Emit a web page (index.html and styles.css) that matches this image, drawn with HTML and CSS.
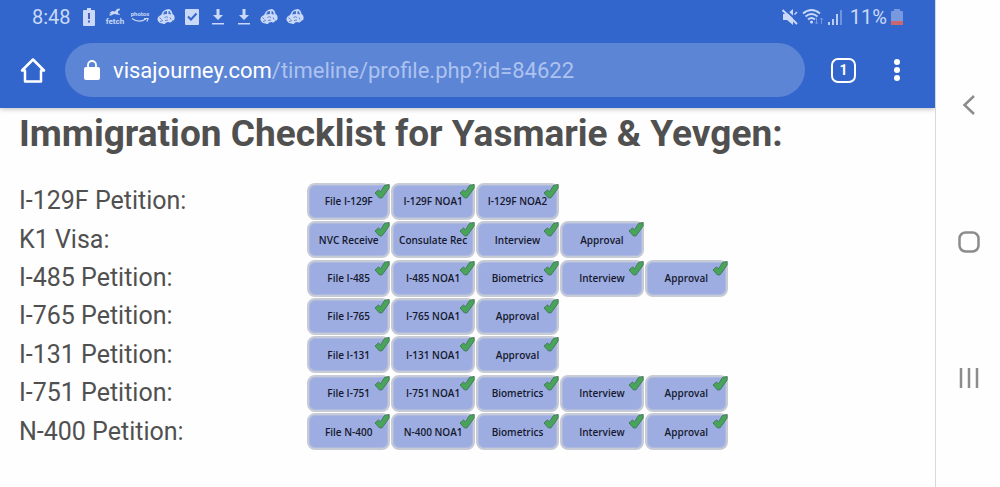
FILE: index.html
```html
<!DOCTYPE html>
<html lang="en">
<head>
<meta charset="utf-8">
<title>Immigration Checklist</title>
<link rel="stylesheet" href="styles.css">
</head>
<body>
<svg class="defs" aria-hidden="true">
  <symbol id="tick" viewBox="0 0 16 16">
    <path d="M1 9.500 4.400 6.500 6.600 8.200 10.600 1.800 15.200 1 15.200 4.500 8 14.400 5.400 14.400Z" fill="#48a458" stroke="#487a62" stroke-width="1" stroke-linejoin="round"/>
  </symbol>
  <symbol id="car" viewBox="0 0 18 18">
    <path d="M0.500 12Q0 8.500 4 7L6 3.500Q8 1 12 1Q15 2 15.500 6Q18 7 17.500 11Q17 13 15.500 12.500Q14 15.500 11.500 14L9 14.500Q8 17 5.500 15.500Q2 15.500 0.500 12Z" fill="#c9d9f7"/>
    <path d="M6 6.500 7.500 3.500 10 3 10 6ZM11.500 3 13 3.500 14 6.500 11.500 6Z" fill="#3f6fd0"/>
    <path d="M2.500 9.500 4.500 11.500M7.500 9.500Q9.500 8 11 9.500M3 13.500 6 12.500M8 12.500 11 12M13 9.500 14 11.500" fill="none" stroke="#5c85d6" stroke-width="1"/>
  </symbol>
  <symbol id="download" viewBox="0 0 14 18">
    <path d="M5.500 1h3v6H12L7 12 2 7h3.500ZM1 15h12v1.500H1Z" fill="#c9d9f7"/>
  </symbol>
</svg>
<div class="screen">
  <div class="main">
    <header class="chrome">
      <div class="status">
        <span class="clock">8:48</span>
        <div class="notes">
          <svg width="12" height="18" viewBox="0 0 12 18"><path d="M4 0h4v2h3q1 0 1 1v14q0 1-1 1H1q-1 0-1-1V3q0-1 1-1h3Z" fill="#c9d9f7"/><path d="M5 5h2v6H5ZM5 12.500h2v2H5Z" fill="#4a5fc0"/></svg>
          <svg width="20" height="18" viewBox="0 0 20 18"><path d="M4 5.500 7 3 10 3.500 12 1 14.500 0.500 15 2 13 3 13 5 15.500 7 12 6.500 9 6 6 7.500 4 7.500 6 5Z" fill="#c9d9f7"/><text class="mini" x="10" y="16" text-anchor="middle">fetch</text></svg>
          <svg width="22" height="18" viewBox="0 0 22 18"><text class="tiny" x="11" y="8" text-anchor="middle">photos</text><path d="M3 10.500Q10 15.500 17 11M15 10.500h4l-1 3" fill="none" stroke="#c9d9f7" stroke-width="1.200"/></svg>
          <svg width="18" height="18"><use href="#car"/></svg>
          <svg width="14" height="18" viewBox="0 0 14 18"><rect y="1" width="14" height="16" rx="1" fill="#c9d9f7"/><path d="M3 8.500 6 11.500 11.500 5.500" fill="none" stroke="#3366cc" stroke-width="2"/></svg>
          <svg width="14" height="18"><use href="#download"/></svg>
          <svg width="14" height="18"><use href="#download"/></svg>
          <svg width="18" height="18"><use href="#car"/></svg>
          <svg width="18" height="18"><use href="#car"/></svg>
        </div>
        <div class="signals">
          <svg width="16" height="18" viewBox="0 0 16 18"><path d="M1 6h4L11 1v16L5 12H1Z" fill="#c9d9f7"/><path d="M2 0.500 16 13.500" stroke="#3366cc" stroke-width="2"/><path d="M0.500 2 15 16" stroke="#c9d9f7" stroke-width="2"/><path d="M12.500 6.500 15 4" stroke="#c9d9f7" stroke-width="1.500"/></svg>
          <svg width="22" height="18" viewBox="0 0 22 18"><path d="M1 5.500Q9.500-1.500 18 5.500M3.500 8.500Q9.500 3.500 15.500 8.500M6 11.500Q9.500 8.500 13 11.500" fill="none" stroke="#c9d9f7" stroke-width="1.800"/><circle cx="9.500" cy="14" r="1.500" fill="#c9d9f7"/><path d="M14.500 10v6M13 14.500l1.500 1.500 1.500-1.500M19.500 16v-6M18 11.500l1.500-1.500 1.500 1.500" fill="none" stroke="#7899df"/></svg>
          <svg width="14" height="18" viewBox="0 0 14 18"><path d="M1 14v3M5 11v6M9 6v11" stroke="#c9d9f7" stroke-width="1.800"/><path d="M13 2v15" stroke="#7899df" stroke-width="1.800"/></svg>
          <span class="percent">11%</span>
          <svg width="12" height="18" viewBox="0 0 12 18"><path d="M3 1h6v2h2q1 0 1 1v9H0V4q0-1 1-1h2Z" fill="#7899df"/><path d="M0 13h12v4H0Z" fill="#c9696f"/></svg>
        </div>
      </div>
      <div class="toolbar">
        <button class="tool" aria-label="Home"><svg width="26" height="26" viewBox="0 0 26 26"><path d="M2 13.500 13 2.500 24 13.500H21V24.500H5V13.500Z" fill="none" stroke="#fff" stroke-width="2.500" stroke-linejoin="round"/></svg></button>
        <a class="address" href="#">
          <svg width="16" height="20" viewBox="0 0 16 20"><rect y="7" width="16" height="13" rx="2" fill="#fff"/><path d="M4 8V5a4 4 0 0 1 8 0v3" fill="none" stroke="#fff" stroke-width="1.800"/></svg>
          <span class="url">visajourney.com<span class="path">/timeline/profile.php?id=84622</span></span>
        </a>
        <button class="tool tabs" aria-label="Open tabs">1</button>
        <button class="tool" aria-label="Menu"><svg width="8" height="24" viewBox="0 0 8 24" fill="#fff"><circle cx="4" cy="4" r="3"/><circle cx="4" cy="12" r="3"/><circle cx="4" cy="20" r="3"/></svg></button>
      </div>
    </header>
    <main class="page">
      <h1 class="title">Immigration Checklist for Yasmarie &amp; Yevgen:</h1>
      <table class="checklist">
        <colgroup><col class="name-col"><col span="5"></colgroup>
        <tbody>
        <tr><th scope="row">I-129F Petition:</th><td><div class="chip">File I-129F<svg class="tick"><use href="#tick"/></svg></div></td><td><div class="chip">I-129F NOA1<svg class="tick"><use href="#tick"/></svg></div></td><td><div class="chip">I-129F NOA2<svg class="tick"><use href="#tick"/></svg></div></td><td></td><td></td></tr>
        <tr><th scope="row">K1 Visa:</th><td><div class="chip">NVC Receive<svg class="tick"><use href="#tick"/></svg></div></td><td><div class="chip">Consulate Rec<svg class="tick"><use href="#tick"/></svg></div></td><td><div class="chip">Interview<svg class="tick"><use href="#tick"/></svg></div></td><td><div class="chip">Approval<svg class="tick"><use href="#tick"/></svg></div></td><td></td></tr>
        <tr><th scope="row">I-485 Petition:</th><td><div class="chip">File I-485<svg class="tick"><use href="#tick"/></svg></div></td><td><div class="chip">I-485 NOA1<svg class="tick"><use href="#tick"/></svg></div></td><td><div class="chip">Biometrics<svg class="tick"><use href="#tick"/></svg></div></td><td><div class="chip">Interview<svg class="tick"><use href="#tick"/></svg></div></td><td><div class="chip">Approval<svg class="tick"><use href="#tick"/></svg></div></td></tr>
        <tr><th scope="row">I-765 Petition:</th><td><div class="chip">File I-765<svg class="tick"><use href="#tick"/></svg></div></td><td><div class="chip">I-765 NOA1<svg class="tick"><use href="#tick"/></svg></div></td><td><div class="chip">Approval<svg class="tick"><use href="#tick"/></svg></div></td><td></td><td></td></tr>
        <tr><th scope="row">I-131 Petition:</th><td><div class="chip">File I-131<svg class="tick"><use href="#tick"/></svg></div></td><td><div class="chip">I-131 NOA1<svg class="tick"><use href="#tick"/></svg></div></td><td><div class="chip">Approval<svg class="tick"><use href="#tick"/></svg></div></td><td></td><td></td></tr>
        <tr><th scope="row">I-751 Petition:</th><td><div class="chip">File I-751<svg class="tick"><use href="#tick"/></svg></div></td><td><div class="chip">I-751 NOA1<svg class="tick"><use href="#tick"/></svg></div></td><td><div class="chip">Biometrics<svg class="tick"><use href="#tick"/></svg></div></td><td><div class="chip">Interview<svg class="tick"><use href="#tick"/></svg></div></td><td><div class="chip">Approval<svg class="tick"><use href="#tick"/></svg></div></td></tr>
        <tr><th scope="row">N-400 Petition:</th><td><div class="chip">File N-400<svg class="tick"><use href="#tick"/></svg></div></td><td><div class="chip">N-400 NOA1<svg class="tick"><use href="#tick"/></svg></div></td><td><div class="chip">Biometrics<svg class="tick"><use href="#tick"/></svg></div></td><td><div class="chip">Interview<svg class="tick"><use href="#tick"/></svg></div></td><td><div class="chip">Approval<svg class="tick"><use href="#tick"/></svg></div></td></tr>
        </tbody>
      </table>
    </main>
  </div>
  <nav class="system" aria-label="System">
    <button class="tool" aria-label="Back"><svg width="26" height="26" viewBox="0 0 26 26"><path d="M18 4 8.500 13 18 22" fill="none" stroke="#8c8c8c" stroke-width="2.500"/></svg></button>
    <button class="tool" aria-label="Home screen"><svg width="26" height="26" viewBox="0 0 26 26"><rect x="3.500" y="3.500" width="19" height="19" rx="6" fill="none" stroke="#8c8c8c" stroke-width="2.500"/></svg></button>
    <button class="tool" aria-label="Recent apps"><svg width="26" height="26" viewBox="0 0 26 26"><path d="M5 3v20M13 3v20M21 3v20" stroke="#8c8c8c" stroke-width="2.500"/></svg></button>
  </nav>
</div>
</body>
</html>
```

FILE: styles.css
```css
* { box-sizing: border-box; }
body { margin: 0; background: #fefefe; color: #505050; font-family: Roboto, "Liberation Sans", sans-serif; }
.defs { position: absolute; width: 0; height: 0; }
svg { display: block; flex: none; }
.screen { display: flex; min-height: 100vh; }
.main { flex: 1; min-width: 0; }
.chrome { background: #3366cc; height: 108px; box-shadow: 0 1px 5px #bbb; }
.status { display: flex; align-items: center; height: 43px; padding: 0 32px 10px 32px; color: #c9d9f7; font-size: 20px; line-height: 24px; }
.clock { width: 44px; }
.notes { display: grid; grid-template-columns: repeat(9, 1fr); justify-items: center; align-items: center; width: 232px; }
.mini { font: 700 8px Roboto, sans-serif; fill: #c9d9f7; }
.tiny { font: 700 6px Roboto, sans-serif; fill: #c9d9f7; }
.signals { display: flex; align-items: center; gap: 4px; margin-left: auto; }
.percent { margin-left: 4px; }
.toolbar { display: flex; align-items: center; padding: 0 34px 0 20px; }
.tool { display: block; padding: 0; border: 0; background: none; color: #fff; }
.address { display: flex; align-items: center; gap: 13px; flex: 1; height: 54px; margin: 0 26px 0 19px; padding: 0 19px; border-radius: 27px; background: #5c85d6; color: #fff; font-size: 22px; text-decoration: none; white-space: nowrap; }
.path { color: #adc2ee; }
.tabs { width: 25px; height: 25px; margin-right: 37px; border: 2px solid #fff; border-radius: 7px; font: 700 14px/21px Roboto, sans-serif; text-align: center; }
.page { padding: 4px 19px 20px; }
.title { margin: 0; font-size: 37px; line-height: 44px; font-weight: 700; }
.checklist { width: 100%; max-width: 710px; height: 269px; margin-top: 26px; border-collapse: collapse; table-layout: fixed; }
.name-col { width: 288px; }
.checklist th { padding: 0; text-align: left; font-weight: 400; font-size: 25px; line-height: 36px; white-space: nowrap; }
.checklist td { padding: 0 1px 0 0; }
.chip { position: relative; display: flex; align-items: center; justify-content: center; height: 37px; border: 2px solid #c6cbd6; border-radius: 8px; background: #9dade2; color: #15192e; font: 600 10px/14px "Open Sans", "Noto Sans", sans-serif; white-space: nowrap; box-shadow: inset 0 0 0 1px #aeb9df; }
.tick { position: absolute; top: -2px; right: -2px; width: 16px; height: 17px; }
.system { display: flex; flex-direction: column; align-items: center; justify-content: space-between; width: 65px; padding: 92px 0 96px 1px; border-left: 1px solid #d8d8d8; background: #fefefe; position: relative; }
```
